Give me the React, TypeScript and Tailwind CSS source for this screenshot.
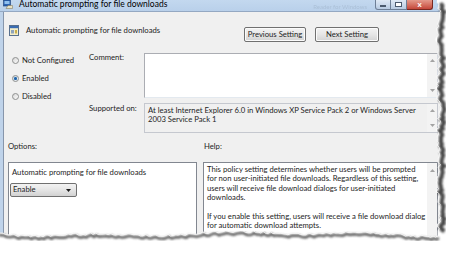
import React from 'react';

// Win7 "Automatic prompting for file downloads" policy dialog, torn-paper crop
const FONT = "font-['Lato','Liberation_Sans',sans-serif]";

function seeded(seed: number) {
  let s = seed;
  return () => {
    s = (s * 16807) % 2147483647;
    return (s - 1) / 2147483646;
  };
}

function tornPoints() {
  const r = seeded(11);
  const right: [number, number][] = [];
  for (let y = 2; y <= 232; y += 2.2) {
    right.push([436.5 + Math.sin(y / 8) * 1.3 + r() * 3.4, y]);
  }
  const bottom: [number, number][] = [];
  for (let x = 438; x >= -3; x -= 2.5) {
    bottom.push([x, 232.5 + Math.sin(x / 21) * 1.4 + Math.sin(x / 57) * 1.3 + r() * 2.4]);
  }
  return { right, bottom };
}

function TornEdge() {
  const { right, bottom } = tornPoints();
  const pts = [...right, ...bottom];
  const line = (p: [number, number][]) => p.map(([x, y]) => `${x.toFixed(1)},${y.toFixed(1)}`).join(' ');
  const fill = `M456,0 L437,0 L${line(pts).split(' ').join(' L')} L-3,255 L456,255 Z`;
  return (
    <svg className="pointer-events-none absolute inset-0" width="456" height="255">
      <defs>
        <filter id="soft" x="-20%" y="-20%" width="140%" height="140%">
          <feGaussianBlur stdDeviation="0.9" />
        </filter>
      </defs>
      <path d={fill} fill="#ffffff" />
      <polyline points={line(right)} transform="translate(3.6,1.2)" fill="none" stroke="#474747" strokeWidth="4" filter="url(#soft)" />
      <polyline points={line(bottom)} transform="translate(1,2.4)" fill="none" stroke="#555555" strokeWidth="2.4" filter="url(#soft)" />
      <polyline points={line(pts)} fill="none" stroke="#fafafa" strokeWidth="0.8" />
    </svg>
  );
}

function TitleIcon() {
  return (
    <svg width="10" height="9" viewBox="0 0 10 9">
      <rect x="0.5" y="0" width="7" height="6" fill="#2c64b4" stroke="#1d3f73" strokeWidth="0.6" />
      <rect x="1.5" y="1" width="5" height="3" fill="#8fc0ef" />
      <path d="M5 5.5 L9.5 5.5 L9.5 8.5 L3 8.5 Z" fill="#e8e2c4" stroke="#7d7150" strokeWidth="0.5" />
    </svg>
  );
}

function PolicyIcon() {
  return (
    <svg width="10" height="11" viewBox="0 0 10 11">
      <rect x="0.5" y="0.5" width="9" height="10" fill="#f4eec9" stroke="#58708e" />
      <rect x="1" y="1" width="8" height="2.2" fill="#3a6cb2" />
      <rect x="2" y="5" width="3" height="3.5" fill="#8ea4bd" />
      <rect x="6" y="5" width="2" height="3.5" fill="#c8ad4c" />
    </svg>
  );
}

function Radio({ checked }: { checked?: boolean }) {
  return (
    <span className="flex h-[7px] w-[7px] items-center justify-center rounded-full border border-[#8e8f8f] bg-gradient-to-br from-[#d8d8d8] to-[#fbfbfb]">
      {checked && <span className="h-[3px] w-[3px] rounded-full bg-[#1f62a8] shadow-[0_0_1px_#4fa3e8]" />}
    </span>
  );
}

function Arrow({ up }: { up?: boolean }) {
  return (
    <svg width="5" height="3" viewBox="0 0 5 3">
      <path d={up ? 'M0 3 L2.5 0 L5 3 Z' : 'M0 0 L2.5 3 L5 0 Z'} fill="#a3a3a3" />
    </svg>
  );
}

function ScrollBar() {
  return (
    <div className="flex w-[10px] shrink-0 flex-col items-center justify-between bg-[#f3f3f3] py-[5px]">
      <Arrow up />
      <Arrow />
    </div>
  );
}

function WinButton({ children }: { children: React.ReactNode }) {
  return (
    <div className="flex h-[15px] items-center justify-center whitespace-nowrap rounded-[2px] border border-[#707070] bg-gradient-to-b from-[#f3f3f3] via-[#e6e6e6] to-[#d3d3d3] text-[7.7px] leading-none shadow-[inset_0_0_0_1px_#fbfbfb]">
      {children}
    </div>
  );
}

export default function App() {
  return (
    <div className={`relative h-[255px] w-[456px] overflow-hidden bg-white text-[7.7px] leading-[10px] text-[#1e1e1e] ${FONT}`}>
      <div className="flex h-full w-[440px] flex-col bg-[#f0f0f0]">
        {/* title bar */}
        <div className="flex h-[12px] shrink-0 border-b border-[#94a8c2] bg-gradient-to-b from-[#c3d8ef] to-[#b9d0ea] pl-[3px]">
          <TitleIcon />
          <span className="ml-[6px] text-[8.5px] leading-[9px] text-black">Automatic prompting for file downloads</span>
          <span className="ml-auto mr-[8px] mt-[3px] text-[6px] leading-[8px] text-[#9fb3c9] opacity-60">Reader for Windows</span>
          <div className="mr-[7px] flex h-[10px]">
            <div className="flex w-[16px] items-end justify-center rounded-bl-[3px] border border-t-0 border-[#6e7f96] bg-gradient-to-b from-[#dfe9f5] to-[#b8cbe2] pb-[2px]">
              <span className="h-[2px] w-[6px] border border-[#4b5a6e] bg-white" />
            </div>
            <div className="flex w-[16px] items-end justify-center border border-l-0 border-t-0 border-[#6e7f96] bg-gradient-to-b from-[#dfe9f5] to-[#b8cbe2] pb-[2px]">
              <span className="h-[5px] w-[7px] border border-[#4b5a6e] bg-white" />
            </div>
            <div className="flex w-[26px] items-end justify-center rounded-br-[3px] border border-l-0 border-t-0 border-[#7a2a22] bg-gradient-to-b from-[#e49a8c] to-[#c4463a] pb-[1px] text-[8px] font-bold leading-none text-white">
              x
            </div>
          </div>
        </div>

        <div className="flex min-h-0 flex-1 border-l-[3px] border-[#bfd3ea]">
          <div className="flex min-w-0 flex-1 flex-col border-l border-[#8796ab]">
            {/* header row */}
            <div className="flex h-[41px] shrink-0">
              <div className="flex items-start gap-[7px] pl-[5px] pt-[13px]">
                <PolicyIcon />
                <span className="whitespace-nowrap">Automatic prompting for file downloads</span>
              </div>
              <div className="ml-auto flex items-start gap-[9px] pr-[61px] pt-[15px]">
                <div className="w-[62px]"><WinButton>Previous Setting</WinButton></div>
                <div className="w-[64px]"><WinButton>Next Setting</WinButton></div>
              </div>
            </div>

            {/* state / comment / supported */}
            <div className="flex h-[81px] shrink-0 pr-[2px]">
              <div className="flex w-[85px] shrink-0 flex-col gap-[4px] pl-[8px]">
                {[
                  ['Not Configured', false],
                  ['Enabled', true],
                  ['Disabled', false],
                ].map(([label, on]) => (
                  <div key={label as string} className="flex h-[14px] items-center gap-[3px]">
                    <Radio checked={on as boolean} />
                    <span className="whitespace-nowrap">{label as string}</span>
                  </div>
                ))}
              </div>
              <div className="flex w-[55px] shrink-0 flex-col">
                <span className="leading-[8px]">Comment:</span>
                <span className="mt-[43px] whitespace-nowrap leading-[8px]">Supported on:</span>
              </div>
              <div className="flex min-w-0 flex-1 flex-col">
                <div className="flex h-[45px] border border-[#abadb3] border-r-[#dbdfe6] border-b-[#e3e9ef] bg-white">
                  <div className="flex-1" />
                  <ScrollBar />
                </div>
                <div className="mt-[5px] flex h-[30px] border border-[#c5c8cf] bg-[#f0f0f0]">
                  <div className="min-w-0 flex-1 overflow-hidden pl-[3px] pt-[2px] leading-[9px]">
                    <div className="whitespace-nowrap">At least Internet Explorer 6.0 in Windows XP Service Pack 2 or Windows Server</div>
                    <div className="whitespace-nowrap">2003 Service Pack 1</div>
                  </div>
                  <ScrollBar />
                </div>
              </div>
            </div>

            {/* options / help */}
            <div className="flex min-h-0 flex-1 gap-[6px] pl-[4px] pr-[2px] pt-[7px]">
              <div className="flex w-[189px] shrink-0 flex-col">
                <span className="h-[10px]">Options:</span>
                <div className="mt-[11px] flex-1 border border-[#828790] bg-white pl-[3px] pt-[4px]">
                  <div className="whitespace-nowrap">Automatic prompting for file downloads</div>
                  <div className="-ml-[2px] mt-[6px] flex h-[14px] w-[67px] items-center justify-between rounded-[2px] border border-[#707070] bg-gradient-to-b from-[#f3f3f3] via-[#e5e5e5] to-[#d2d2d2] pl-[2px] pr-[5px]">
                    <span className="leading-none">Enable</span>
                    <svg width="5" height="3" viewBox="0 0 5 3">
                      <path d="M0 0 L2.5 3 L5 0 Z" fill="#1a1a1a" />
                    </svg>
                  </div>
                </div>
              </div>
              <div className="flex min-w-0 flex-1 flex-col">
                <span className="h-[10px] pl-[1px]">Help:</span>
                <div className="mt-[11px] flex flex-1 border border-[#828790] bg-white">
                  <div className="min-w-0 flex-1 pl-[3px] pt-[2px] leading-[9.4px]">
                    <div className="whitespace-nowrap">This policy setting determines whether users will be prompted</div>
                    <div className="whitespace-nowrap">for non user-initiated file downloads. Regardless of this setting,</div>
                    <div className="whitespace-nowrap">users will receive file download dialogs for user-initiated</div>
                    <div className="whitespace-nowrap">downloads.</div>
                    <div className="h-[9.4px]" />
                    <div className="whitespace-nowrap">If you enable this setting, users will receive a file download dialog</div>
                    <div className="whitespace-nowrap">for automatic download attempts.</div>
                  </div>
                  <div className="flex w-[10px] shrink-0 justify-center bg-[#f3f3f3] pt-[6px]">
                    <Arrow up />
                  </div>
                </div>
              </div>
            </div>
          </div>
        </div>
      </div>
      <TornEdge />
    </div>
  );
}
